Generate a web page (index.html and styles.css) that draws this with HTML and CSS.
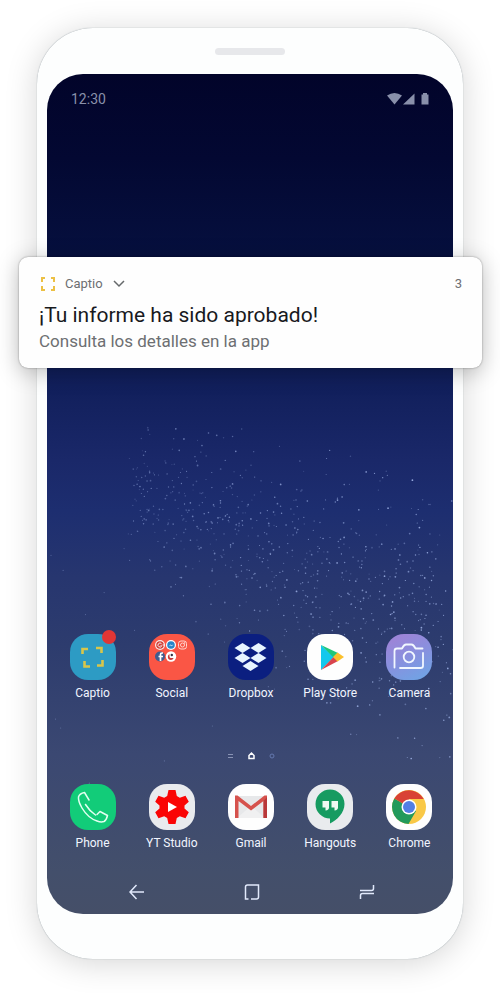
FILE: index.html
```html
<!DOCTYPE html>
<html lang="es">
<head>
<meta charset="utf-8">
<meta name="viewport" content="width=device-width, initial-scale=1">
<title>Captio</title>
<link rel="stylesheet" href="styles.css">
</head>
<body>
<main class="phone">
  <div class="speaker"></div>
  <div class="screen">
    <svg class="stars" id="stars" viewBox="0 0 405 840" preserveAspectRatio="none" aria-hidden="true"></svg>
    <header class="status">
      <time>12:30</time>
      <svg width="42" height="12" viewBox="0 0 42 12" fill="currentColor" aria-hidden="true">
        <path d="M0 2.5Q7.500-2.500 15 2.500L7.500 11.500z"/>
        <path d="M16 11.500 27.500.5v11z"/>
        <path d="M34.500 1.500H36V0h4v1.500h1.500v10h-7z"/>
      </svg>
    </header>

    <nav class="apps" aria-label="Apps">
      <button class="app" type="button">
        <span class="tile captio">
          <svg viewBox="0 0 46 46" fill="none" stroke="#d8c64a" stroke-width="2.600">
            <path d="M12.500 20v-5H18"/><path d="M26 14h5.500v5"/><path d="M32.500 26v5.500H27"/><path d="M14.500 27v5.500H20"/>
          </svg>
          <span class="badge"></span>
        </span>
        <span>Captio</span>
      </button>
      <button class="app" type="button">
        <span class="tile social">
          <svg viewBox="0 0 46 46">
            <circle cx="11" cy="11" r="5" fill="#f8eceb"/><circle cx="11" cy="11" r="3.800" fill="#cf4038"/>
            <path d="M12.500 9.700a2 2 0 1 0 .3 2.200h-1.500M13.500 11h2" fill="none" stroke="#fff" stroke-width=".9"/>
            <circle cx="22" cy="11" r="5" fill="#fff"/><circle cx="22" cy="11" r="3.800" fill="#2785c9"/>
            <path d="m19.700 12.500 1.800-2 1.200 1 1.800-1.300-1.700 2.100-1.200-1z" fill="#fff"/>
            <g fill="none" stroke="#ffd3cc"><rect x="29.500" y="7" width="8" height="8" rx="2.500"/><circle cx="33.500" cy="11" r="2"/></g><circle cx="35.700" cy="8.900" r=".6" fill="#fff"/>
            <circle cx="11" cy="22.500" r="5" fill="#405b8e"/>
            <path d="M14 19h-1q-1.500 0-1.500 1.500V27M9.500 22.500H14" fill="none" stroke="#fff" stroke-width="1.700"/>
            <circle cx="22" cy="22.500" r="5.200" fill="#fff"/><path d="M20.500 20v2.500q0 1.500 1.700 1.500h2.500q-1 2-2.700 2-3 0-3.200-3 0-2 1.700-3z" fill="#c33b3b"/><circle cx="22.800" cy="21" r="1.200" fill="#334"/>
          </svg>
        </span>
        <span>Social</span>
      </button>
      <button class="app" type="button">
        <span class="tile dropbox">
          <svg viewBox="0 0 46 46" fill="#e8f5ff">
            <path d="m14.500 9 8 5-8 5-8-5z"/><path d="m30.500 9 8 5-8 5-8-5z"/><path d="m14.500 19 8 5-8 5-8-5z"/><path d="m30.500 19 8 5-8 5-8-5z"/><path d="m22.500 27 8 5-8 5-8-5z"/>
          </svg>
        </span>
        <span>Dropbox</span>
      </button>
      <button class="app" type="button">
        <span class="tile white">
          <svg viewBox="0 0 46 46">
            <path d="M14 11v25l13-13z" fill="#14c8ed"/><path d="M14 11l17 8-4.500 4.500z" fill="#20c77a"/><path d="M14 36l17-9-4.500-4z" fill="#d9444d"/><path d="m30.500 18.500 6.500 4.500-6.500 4.500-4.500-4.500z" fill="#fbc02d"/>
          </svg>
        </span>
        <span>Play Store</span>
      </button>
      <button class="app" type="button">
        <span class="tile camera">
          <svg viewBox="0 0 46 46" fill="none" stroke="#f1f7ff" stroke-width="1.800" stroke-linecap="round" stroke-linejoin="round">
            <path d="M8.500 33.500V17q0-2.500 2.500-2.500h5q2-4 4-4h5.500q2 0 4 4h7M37 19v13q0 2-2.500 2H14"/><circle cx="23" cy="23" r="5.300"/>
          </svg>
        </span>
        <span>Camera</span>
      </button>
    </nav>

    <div class="pages">
      <svg width="44" height="8" viewBox="0 0 44 8" fill="none" aria-hidden="true">
        <path d="M0 2.500h5M0 5.500h5" stroke="#8993b4"/>
        <path d="M21 3.500 23.500 1 26 3.500v3h-5z" stroke="#fff" stroke-width="1.500"/>
        <circle cx="44" cy="4" r="2" stroke="#6478ae"/>
      </svg>
    </div>

    <nav class="apps" aria-label="Favoritos">
      <button class="app" type="button">
        <span class="tile call">
          <svg viewBox="0 0 46 46" fill="none" stroke="#e1fff0" stroke-width="1.500" stroke-linecap="round" stroke-linejoin="round">
            <path d="M19 16 14.500 8.500q-5 1-6 4.500-.5 4 3.500 11 6 10 15 13 4 1.500 7 .5 2.500-1.500 3.500-6l-7.500-4-3 3"/><path d="M15.500 20.500q4 6.500 10 10.500"/>
          </svg>
        </span>
        <span>Phone</span>
      </button>
      <button class="app" type="button">
        <span class="tile pale">
          <svg viewBox="0 0 46 46">
            <path d="M19.500 6h7l1.300 6 3 1.700 5.700-2 3.300 6-4.300 3.800v3l4.300 3.800-3.300 6-5.700-2-3 1.700-1.300 6h-7l-1.300-6-3-1.700-5.700 2-3.300-6 4.300-3.800v-3l-4.300-3.800 3.300-6 5.700 2 3-1.700z" fill="#fa0505"/>
            <path d="m19 18 9 5-9 5z" fill="#fff"/>
          </svg>
        </span>
        <span>YT Studio</span>
      </button>
      <button class="app" type="button">
        <span class="tile white">
          <svg viewBox="0 0 46 46">
            <path d="M9 12h28v22H9z" fill="#e7e8ea"/><path d="m9 34 14-12 14 12" fill="#f0f0f1"/>
            <path d="M7 34V11.500h2.500L23 22l13.500-10.500H39V34h-3.500V17L23 26.500 10.500 17v17z" fill="#d6524d"/>
            <path d="M35.500 17 39 13v21h-3.500z" fill="#b9383a"/>
          </svg>
        </span>
        <span>Gmail</span>
      </button>
      <button class="app" type="button">
        <span class="tile pale">
          <svg viewBox="0 0 46 46">
            <path d="M23 5.500a14.500 14.500 0 0 1 14.500 14.500c0 9-7.500 16-14.500 19.500v-5A14.500 14.500 0 0 1 23 5.500z" fill="#169b61"/>
            <path d="M15.500 17h6.500v6.500q0 2.500-3.500 3v-3h-3zM24.500 17H31v6.500q0 2.500-3.500 3v-3h-3z" fill="#eff8f2"/>
          </svg>
        </span>
        <span>Hangouts</span>
      </button>
      <button class="app" type="button">
        <span class="tile white">
          <svg viewBox="0 0 46 46">
            <circle cx="23" cy="23" r="17" fill="#f9c846"/>
            <path d="M23 23 8.300 14.500A17 17 0 0 0 22.500 40L30 27z" fill="#229a5b"/>
            <path d="M23 23 8.300 14.500A17 17 0 0 1 37.700 15H23z" fill="#d94235"/>
            <circle cx="23" cy="23" r="7.500" fill="#fff"/><circle cx="23" cy="23" r="6" fill="#527ee4"/>
          </svg>
        </span>
        <span>Chrome</span>
      </button>
    </nav>

    <nav class="system" aria-label="Sistema">
      <button type="button" aria-label="Atrás"><svg viewBox="0 0 16 16"><path d="M7.500 1 1 8l6.500 7M1 8h14"/></svg></button>
      <button type="button" aria-label="Inicio"><svg viewBox="0 0 16 16"><path d="M4.500 15H1.500V3q0-2 2-2h11v12q0 2-2 2H7"/></svg></button>
      <button type="button" aria-label="Recientes"><svg viewBox="0 0 16 16"><path d="M1 6.500h11.500q2 0 2-2V1M15 9.500H3.500q-2 0-2 2V15"/></svg></button>
    </nav>
  </div>
</main>

<section class="notice" aria-label="Notificación">
  <div class="notice-top">
    <svg width="14" height="14" viewBox="0 0 14 14" fill="none" stroke="#ecc044" stroke-width="2" aria-hidden="true"><path d="M1 5V1h3M10 1h3v4M13 9v4h-3M4 13H1V9"/></svg>
    <span>Captio</span>
    <svg width="12" height="8" viewBox="0 0 12 8" fill="none" stroke="#66696b" stroke-width="1.500" aria-hidden="true"><path d="m1 1 5 5 5-5"/></svg>
    <span class="count">3</span>
  </div>
  <h1>¡Tu informe ha sido aprobado!</h1>
  <p>Consulta los detalles en la app</p>
</section>
<script src="stars.js"></script>
</body>
</html>
```
FILE: styles.css
```css
* {
  box-sizing: border-box;
}

body {
  position: relative;
  margin: 0;
  padding: 28px 37px 34px;
  background: #fff;
  font-family: Roboto, "Liberation Sans", sans-serif;
}

button {
  margin: 0;
  padding: 0;
  border: 0;
  background: none;
  color: inherit;
  font: inherit;
}

.phone {
  padding: 20px 10px 45px;
  border-radius: 56px;
  background: #fdfefe;
  box-shadow: 0 0 1px #7f8b92, 0 4px 32px rgba(0, 0, 0, 0.17);
}

.speaker {
  width: 70px;
  height: 7px;
  margin: 0 auto 19px;
  border-radius: 4px;
  background: #e7e8eb;
}

.screen {
  position: relative;
  display: flex;
  flex-direction: column;
  min-height: 840px;
  overflow: hidden;
  border-radius: 36px;
  background: linear-gradient(#02042a 0%, #030832 10%, #06103f 22%, #101e5a 36%, #1a2869 46%, #1d2e70 52%, #27366f 60%, #2d3c6e 68%, #3b4872 81%, #434f6b 95%, #454f68 100%);
  color: #f1f5ff;
}

.stars {
  position: absolute;
  inset: 0;
  width: 100%;
  height: 100%;
  fill: #a9bdf0;
}

.status,
.apps,
.pages,
.system {
  position: relative;
}

.status {
  display: flex;
  align-items: center;
  justify-content: space-between;
  margin-bottom: auto;
  padding: 16px 24px 0;
  color: #8990aa;
  font-size: 14px;
  line-height: 18px;
}

.apps {
  display: grid;
  grid-template-columns: repeat(5, 1fr);
  padding: 0 4px 0 6px;
}

.app {
  display: flex;
  flex-direction: column;
  align-items: center;
  gap: 5px;
  font-size: 12px;
  line-height: 16px;
}

.tile {
  position: relative;
  width: 46px;
  height: 46px;
  border-radius: 18px;
}

.tile svg {
  display: block;
  width: 46px;
  height: 46px;
}

.captio {
  background: #2d9bc4;
}

.badge {
  position: absolute;
  top: -4px;
  right: 0;
  width: 14px;
  height: 14px;
  border-radius: 50%;
  background: #e13635;
}

.social {
  background: #fa5645;
}

.dropbox {
  background: #0b1f80;
}

.white {
  background: #fefefe;
}

.pale {
  background: #e9ebee;
}

.camera {
  background: linear-gradient(155deg, #9b85d8 15%, #8592df 55%, #6ca7e6);
}

.call {
  background: #12cc79;
}

.pages {
  display: flex;
  justify-content: center;
  padding: 51px 0 24px;
}

.pages svg {
  overflow: visible;
}

.system {
  display: flex;
  justify-content: space-between;
  padding: 33px 78px 14px 82px;
}

.system svg {
  display: block;
  width: 16px;
  height: 16px;
  fill: none;
  stroke: #e1e9fb;
  stroke-width: 1.5;
}

.notice {
  position: absolute;
  top: 257px;
  right: 18px;
  left: 19px;
  padding: 18px 20px 16px;
  border-radius: 9px;
  background: #fefefe;
  box-shadow: 0 0 2px rgba(0, 0, 0, 0.4), 0 4px 22px rgba(0, 0, 0, 0.25);
  color: #6d6f72;
}

.notice-top {
  display: flex;
  align-items: center;
  gap: 10px;
  padding-left: 2px;
  font-size: 13px;
  line-height: 18px;
}

.count {
  margin-left: auto;
}

.notice h1 {
  margin: 8px 0 1px;
  color: #18191d;
  font-size: 21px;
  font-weight: 400;
  line-height: 28px;
}

.notice p {
  margin: 0;
  font-size: 17px;
  line-height: 22px;
}
```
FILE: stars.js
```js
// Scatter a repeatable band of stars diagonally across the wallpaper.
let seed = 48271;
const random = () => {
  seed = (seed * 48271) % 2147483647;
  return seed / 2147483647;
};
const field = document.getElementById("stars");

function star(x, y, r, opacity) {
  const dot = document.createElementNS("http://www.w3.org/2000/svg", "circle");
  dot.setAttribute("cx", x.toFixed(1));
  dot.setAttribute("cy", y.toFixed(1));
  dot.setAttribute("r", r.toFixed(2));
  dot.setAttribute("opacity", opacity.toFixed(2));
  field.append(dot);
}

for (let i = 0; i < 750; i++) {
  const t = random();
  const spread = (random() + random() + random() - 1.5) * (65 + 75 * t);
  const x = 90 + t * 315 + (random() - 0.5) * 30;
  const y = 415 + t * 150 + spread;
  star(x, y, 0.5 + random() * 0.4, (0.3 + random() * 0.6) * (0.6 + t * 0.4));
}

for (let i = 0; i < 35; i++) {
  star(random() * 405, 400 + random() * 330, 0.6, 0.35);
}
```
